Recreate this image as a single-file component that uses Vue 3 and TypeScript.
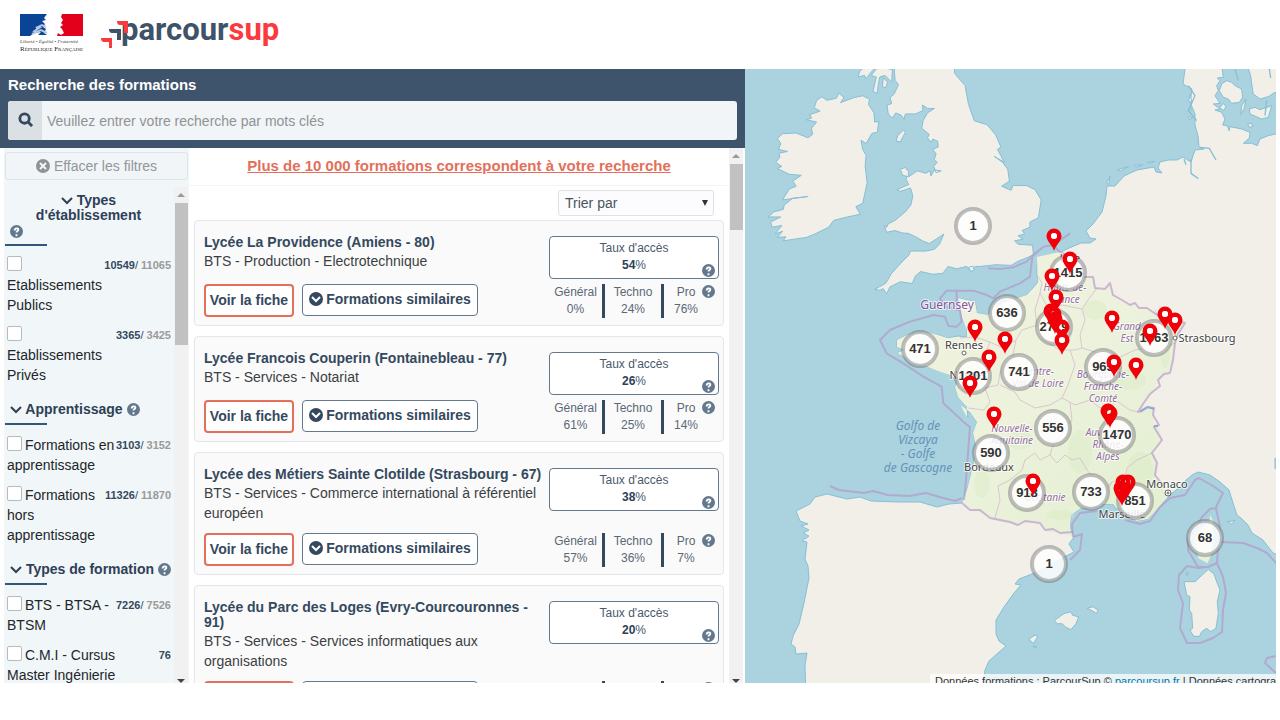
<script setup lang="ts">
import { ref } from 'vue'

interface FilterItem { id: string; label: string; count: string; total?: string }
interface FilterGroup { title: string; centered?: boolean; items: FilterItem[] }
interface Formation { school: string; course: string; rate: string; general: string; techno: string; pro: string }
interface Cluster { x: number; y: number; n: string }
interface MapLabel { x: number; y: number; kind: string; lines: string[] }

const query = ref('')
const sort = ref('')

const groups: FilterGroup[] = [
  {
    title: "Types d'établissement",
    centered: true,
    items: [
      { id: 'public', label: 'Etablissements Publics', count: '10549', total: '11065' },
      { id: 'prive', label: 'Etablissements Privés', count: '3365', total: '3425' },
    ],
  },
  {
    title: 'Apprentissage',
    items: [
      { id: 'app', label: 'Formations en apprentissage', count: '3103', total: '3152' },
      { id: 'hors', label: 'Formations hors apprentissage', count: '11326', total: '11870' },
    ],
  },
  {
    title: 'Types de formation',
    items: [
      { id: 'bts', label: 'BTS - BTSA - BTSM', count: '7226', total: '7526' },
      { id: 'cmi', label: 'C.M.I - Cursus Master Ingénierie', count: '76' },
    ],
  },
]

const formations: Formation[] = [
  { school: 'Lycée La Providence (Amiens - 80)', course: 'BTS - Production - Electrotechnique', rate: '54', general: '0%', techno: '24%', pro: '76%' },
  { school: 'Lycée Francois Couperin (Fontainebleau - 77)', course: 'BTS - Services - Notariat', rate: '26', general: '61%', techno: '25%', pro: '14%' },
  { school: 'Lycée des Métiers Sainte Clotilde (Strasbourg - 67)', course: 'BTS - Services - Commerce international à référentiel européen', rate: '38', general: '57%', techno: '36%', pro: '7%' },
  { school: 'Lycée du Parc des Loges (Evry-Courcouronnes - 91)', course: 'BTS - Services - Services informatiques aux organisations', rate: '20', general: '35%', techno: '48%', pro: '17%' },
]

const clusters: Cluster[] = [
  { x: 973, y: 226, n: '1' }, { x: 1068, y: 273, n: '1415' }, { x: 1007, y: 313, n: '636' },
  { x: 1054, y: 327, n: '2719' }, { x: 920, y: 349, n: '471' }, { x: 973, y: 376, n: '1201' },
  { x: 1019, y: 372, n: '741' }, { x: 1103, y: 367, n: '965' }, { x: 1154, y: 338, n: '1363' },
  { x: 1053, y: 428, n: '556' }, { x: 1117, y: 435, n: '1470' }, { x: 991, y: 453, n: '590' },
  { x: 1027, y: 493, n: '918' }, { x: 1091, y: 492, n: '733' }, { x: 1135, y: 501, n: '851' },
  { x: 1049, y: 564, n: '1' }, { x: 1205, y: 538, n: '68' },
]

const pins: [number, number][] = [
  [1054, 236], [1070, 259], [1052, 276], [1056, 297], [1051, 311], [1054, 314], [1055, 319],
  [1062, 327], [1062, 340], [975, 327], [1005, 339], [989, 357], [970, 383], [1112, 318],
  [1165, 314], [1175, 320], [1150, 331], [1114, 362], [1136, 365], [994, 414], [1108, 411],
  [1110, 413], [1033, 481], [1123, 482], [1128, 482], [1121, 488], [1122, 491],
]

const labels: MapLabel[] = [
  { x: 947, y: 309, kind: 'island', lines: ['Guernsey'] },
  { x: 964, y: 349, kind: 'city', lines: ['Rennes'] },
  { x: 968, y: 379, kind: 'city', lines: ['Nantes'] },
  { x: 1070, y: 262, kind: 'city', lines: ['Lille'] },
  { x: 1207, y: 342, kind: 'city', lines: ['Strasbourg'] },
  { x: 989, y: 471, kind: 'city', lines: ['Bordeaux'] },
  { x: 1122, y: 518, kind: 'city', lines: ['Marseille'] },
  { x: 1167, y: 488, kind: 'city', lines: ['Monaco'] },
  { x: 1065, y: 291, kind: 'region', lines: ['Hauts-de-', 'France'] },
  { x: 1127, y: 330, kind: 'region', lines: ['Grand', 'Est'] },
  { x: 1038, y: 375, kind: 'region', lines: ['Centre-', 'Val de Loire'] },
  { x: 1103, y: 378, kind: 'region', lines: ['Bourgogne-', 'Franche-', 'Comté'] },
  { x: 1012, y: 432, kind: 'region', lines: ['Nouvelle-', 'Aquitaine'] },
  { x: 1108, y: 436, kind: 'region', lines: ['Auvergne-', 'Rhône-', 'Alpes'] },
  { x: 1045, y: 501, kind: 'region', lines: ['Occitanie'] },
  { x: 918, y: 430, kind: 'sea', lines: ['Golfo de', 'Vizcaya', '- Golfe', 'de Gascogne'] },
]
const lineStep = (kind: string) => (kind === 'sea' ? 14 : 12)

const francePath =
  'M1055,253L1060,252 1073,258 1078,270 1082,277 1093,277 1097,288 1105,288 1110,283 1113,295 1122,300 1130,305 1147,308 1160,317 1172,320 1185,323 1178,334 1175,343 1173,360 1170,373 1164,374 1158,380 1153,392 1143,402 1138,412 1147,407 1155,410 1153,423 1159,428 1162,440 1152,453 1157,467 1155,478 1165,488 1167,495 1160,506 1148,519 1137,521 1120,511 1113,504 1100,504 1081,508 1071,515 1070,528 1073,537 1060,533 1047,532 1040,523 1030,522 1017,525 1010,522 993,520 985,514 977,513 962,503 967,490 972,470 977,450 973,433 977,422 970,412 960,405 967,417 967,407 958,397 955,387 960,379 950,375 935,370 920,363 907,358 897,353 905,350 897,347 897,340 907,335 923,332 938,335 947,338 967,337 967,330 962,317 958,298 975,302 977,313 988,315 993,308 1010,300 1027,295 1038,283 1037,257Z'
</script>

<template>
  <div class="page">
    <header class="masthead">
      <svg class="marianne" viewBox="0 0 66 42" role="img" aria-label="République Française">
        <path fill="#0a4595" d="M1 1H28L25 5 27 7 23 8 26 11 24 14 27 16 25 20 28 22H19L22 19 15 20 11 23H1Z" />
        <path fill="#e2001a" d="M43 1H64V23H38L39 20 42 22 45 20 43 16 41 14 44 12 42 10 44 7 42 4Z" />
        <path fill="none" stroke="#b4c6e0" stroke-width="2" d="M14 19L20 15 17 15 23 12 27 14M13 21L22 17 28 20" />
        <text x="1" y="30" class="motto">Liberté • Égalité • Fraternité</text>
        <text x="1" y="38" class="republic">R<tspan class="small">ÉPUBLIQUE</tspan> F<tspan class="small">RANÇAISE</tspan></text>
      </svg>
      <svg class="brand" viewBox="0 0 182 36" role="img" aria-label="parcoursup">
        <text x="22" y="23" class="wordmark">parcour<tspan class="sup">sup</tspan></text>
        <path fill="#fb3a40" d="M2 21H13V31H10V25H5Q2 25 2 21ZM18 4H29V16H25V8H21Q18 8 18 4Z" />
        <path fill="#3e5368" d="M10 12H22V23H18V16H13Q10 16 10 12Z" />
      </svg>
    </header>

    <main class="workspace">
      <section class="finder">
        <form class="search" @submit.prevent>
          <label class="search-title" for="keywords">Recherche des formations</label>
          <div class="search-bar">
            <button type="submit" class="search-button" aria-label="Rechercher">
              <svg viewBox="0 0 16 16"><circle cx="7" cy="7" r="5" /><path d="M11 11L15 15" /></svg>
            </button>
            <input id="keywords" v-model="query" type="text" placeholder="Veuillez entrer votre recherche par mots clés">
          </div>
        </form>

        <div class="columns">
          <aside class="filters">
            <button type="button" class="clear">
              <svg viewBox="0 0 14 14"><circle cx="7" cy="7" r="7" fill="#8e9396" /><path d="M4 4L10 10M10 4L4 10" stroke="#f1f6f8" stroke-width="2" /></svg>
              Effacer les filtres
            </button>
            <div class="filter-scroll">
              <div class="filter-list">
                <fieldset v-for="g in groups" :key="g.title" :class="{ centered: g.centered }">
                  <legend>
                    <span class="group-title">
                      <svg class="chevron" viewBox="0 0 12 8"><path d="M1 1L6 6 11 1" /></svg>
                      {{ g.title }}
                    </span>
                    <button type="button" class="help" aria-label="Aide">
                      <svg viewBox="0 0 14 14"><circle cx="7" cy="7" r="7" /><path d="M5 6C5 3 9 3 9 5C9 7 7 6 7 8M7 10V12" /></svg>
                    </button>
                  </legend>
                  <div v-for="i in g.items" :key="i.id" class="filter-row">
                    <label :for="i.id"><input :id="i.id" type="checkbox"> {{ i.label }}</label>
                    <span class="count"><b>{{ i.count }}</b><template v-if="i.total">/ <b class="total">{{ i.total }}</b></template></span>
                  </div>
                </fieldset>
              </div>
              <div class="scrollbar side" aria-hidden="true"><i class="up"></i><span class="thumb"></span><i class="down"></i></div>
            </div>
          </aside>

          <div class="results">
            <div class="result-list">
              <h2><a href="#">Plus de 10 000 formations correspondent à votre recherche</a></h2>
              <div class="sort">
                <select v-model="sort" aria-label="Trier par"><option value="">Trier par</option></select>
              </div>
              <article v-for="f in formations" :key="f.school" class="card">
                <div class="description">
                  <h3>{{ f.school }}</h3>
                  <p>{{ f.course }}</p>
                </div>
                <div class="rate">
                  <span>Taux d'accès</span>
                  <span><b>{{ f.rate }}</b>%</span>
                  <button type="button" class="help" aria-label="Aide">
                    <svg viewBox="0 0 14 14"><circle cx="7" cy="7" r="7" /><path d="M5 6C5 3 9 3 9 5C9 7 7 6 7 8M7 10V12" /></svg>
                  </button>
                </div>
                <div class="actions">
                  <button type="button" class="view">Voir la fiche</button>
                  <button type="button" class="similar">
                    <svg viewBox="0 0 14 14"><circle cx="7" cy="7" r="7" fill="#34495e" /><path d="M3 5L7 9 11 5" stroke="#fff" stroke-width="2" fill="none" /></svg>
                    Formations similaires
                  </button>
                </div>
                <div class="stats">
                  <span>Général<br>{{ f.general }}</span>
                  <span>Techno<br>{{ f.techno }}</span>
                  <span>Pro<br>{{ f.pro }}</span>
                  <button type="button" class="help" aria-label="Aide">
                    <svg viewBox="0 0 14 14"><circle cx="7" cy="7" r="7" /><path d="M5 6C5 3 9 3 9 5C9 7 7 6 7 8M7 10V12" /></svg>
                  </button>
                </div>
              </article>
            </div>
            <div class="scrollbar main" aria-hidden="true"><i class="up"></i><span class="thumb"></span><i class="down"></i></div>
          </div>
        </div>
      </section>

      <section class="map" aria-label="Carte des formations">
        <svg class="map-canvas" viewBox="745 69 531 614" preserveAspectRatio="xMinYMin slice">
          <defs>
            <linearGradient id="terrain" x1="0" y1="0" x2="1" y2="1">
              <stop offset="0" stop-color="#f1f2df" /><stop offset="0.5" stop-color="#ecf2dc" /><stop offset="1" stop-color="#e2efd0" />
            </linearGradient>
          </defs>
          <rect x="745" y="69" width="531" height="614" fill="#aad3df" />
          <!-- continental Europe -->
          <path class="land" d="M1183,60L1185,69 1183,84 1192,89 1190,102 1195,114 1195,125 1198,136 1199,147 1204,149 1195,150 1191,162 1183,157 1177,160 1168,160 1160,162 1158,168 1162,173 1156,172 1154,167 1137,170 1124,176 1115,186 1107,186 1106,196 1102,212 1093,224 1086,231 1090,238 1096,239 1090,243 1081,243 1069,248 1057,254 1042,260 1037,265 1037,275 1038,282 1027,295 1010,300 993,308 988,315 977,313 975,302 967,300 958,298 960,308 962,317 966,323 967,330 967,337 958,336 947,338 938,335 930,336 923,332 915,335 907,335 897,340 897,347 905,350 897,353 907,358 913,359 920,363 928,365 935,370 942,371 950,375 955,379 960,379 955,387 958,397 967,407 968,417 960,405 963,410 970,412 977,422 973,433 977,450 972,470 967,490 962,503 949,504 937,507 920,502 897,502 871,501 860,497 847,499 827,494 815,497 810,504 796,511 800,521 808,524 801,526 809,530 803,533 809,536 802,541 807,542 805,559 808,566 809,578 804,603 799,624 793,636 791,644 795,647 796,654 807,653 805,665 806,700 980,700 984,678 985,670 989,661 998,653 1006,646 999,641 996,634 996,620 1004,607 1014,593 1021,585 1015,584 1019,579 1032,574 1049,566 1060,559 1074,552 1069,544 1074,537 1070,528 1071,515 1081,508 1091,508 1100,504 1113,504 1116,509 1120,507 1125,512 1137,521 1148,519 1154,511 1160,506 1171,494 1180,487 1185,481 1192,475 1198,472 1210,475 1220,482 1229,490 1233,503 1237,515 1242,519 1248,525 1252,533 1263,540 1273,553 1290,560V60Z" />
          <g transform="translate(745 60) scale(.3412)">
            <path class="land" d="M436,10L440,60 450,72 437,100 425,110 430,128 416,132 420,158 432,170 442,155 458,162 466,174 470,158 500,158 522,148 520,132 535,142 555,142 535,155 522,178 518,200 540,218 535,228 545,242 550,232 565,238 566,255 550,262 560,275 555,292 563,300 553,312 560,330 575,325 555,322 545,340 542,325 530,332 505,325 480,342 475,338 472,350 480,365 445,380 455,385 485,375 492,398 486,425 470,445 440,470 420,480 415,490 408,486 415,505 440,500 462,507 478,508 500,518 520,530 540,538 560,525 583,510 570,540 555,555 530,560 485,560 480,572 460,592 430,625 412,655 380,672 395,675 405,670 415,685 425,665 455,650 490,655 500,632 515,620 550,628 580,625 595,605 620,612 650,605 660,618 675,605 690,605 735,600 780,602 800,590 830,578 845,570 843,543 800,540 790,530 815,525 800,515 820,510 812,500 835,490 835,475 860,462 868,410 850,380 825,368 785,368 780,382 752,370 775,355 770,320 755,300 730,282 760,300 740,262 750,255 735,220 710,190 672,178 655,130 645,75 615,40 612,10Z" />
            <path class="land" d="M275,97L268,112 240,118 225,108 210,118 203,140 220,150 190,160 195,170 180,175 210,182 195,200 198,218 185,228 150,214 110,216 95,230 105,245 98,262 125,268 100,273 102,285 90,300 108,312 95,318 130,335 165,338 140,355 150,370 130,378 110,410 185,400 140,405 115,425 112,438 85,445 68,460 105,460 75,475 80,490 108,485 88,510 110,502 95,520 120,518 112,530 145,525 180,520 205,510 245,490 260,470 300,460 338,452 325,430 345,420 358,360 352,310 355,280 345,262 340,235 355,245 372,215 388,212 392,180 380,182 378,155 362,130 365,115 345,105 320,110 280,125 290,110Z" />
            <path class="land" d="M465,205L470,212 455,240 443,238 447,222ZM455,320L470,315 480,328 478,342 462,338ZM335,35L345,25 385,20 370,35 355,55 350,45 332,50ZM390,20L432,28 430,65 410,45 395,50 390,75 388,98 375,92 385,50 370,45ZM405,52L418,65 412,82 403,78ZM1305,100L1310,125 1300,120ZM1303,140L1310,145 1300,150ZM1300,165L1312,170 1302,175ZM1070,340L1060,360 1066,365ZM1090,322L1125,312 1100,325ZM1140,308L1165,308 1145,314ZM1180,300L1200,297 1188,303ZM655,608L668,604 672,615 662,620ZM620,715L635,718 628,722Z" />
          </g>
          <!-- Baltic straits and Danish islands -->
          <g transform="translate(1160 64) scale(.3333)">
            <path class="water" d="M355,208L325,215 300,225 292,245 275,238 250,238 268,222 270,205 245,195 210,188 207,200 203,186 188,183 195,165 185,145 165,138 180,135 160,120 180,118 165,95 175,80 170,65 180,50 172,42 190,40 185,5H355Z" />
            <path class="land" d="M185,60L200,50 215,55 225,65 245,75 248,100 238,115 215,118 205,105 190,100 178,80ZM262,5L272,35 275,60 280,90 300,105 325,98 345,85 360,90V5ZM268,135L285,130 300,137 335,125 325,160 305,165 270,150ZM258,105L252,135 242,152 245,125ZM190,118L198,128 190,140 180,130ZM263,180L275,178 278,188 268,190Z" />
            <path class="coast" d="M120,250L148,253 168,288M93,285V328L115,344M72,285L78,302M320,110L315,155M225,15L235,50M328,15L332,42M85,65L105,95 85,140 110,170" />
          </g>
          <!-- Corsica, Sardinia and nearby islands -->
          <g transform="translate(1140 380) scale(.3333)">
            <path class="land" d="M205,568L222,582 230,605 240,630 232,665 235,700 228,745 212,755 200,745 185,755 178,770 160,768 150,750 158,745 155,700 148,690 150,650 140,645 132,605 165,605ZM262,425L285,422 275,432ZM138,580L145,577 140,588Z" />
            <path class="corsica" d="M211,405L218,420 220,470 215,520 203,550 175,535 165,470 190,440 207,430Z" />
            <path class="water" d="M405,235L420,235V275L405,265Z" />
          </g>
          <g transform="translate(745 460) scale(.3412)">
            <path class="land" d="M907,470L935,450 955,445 960,455 978,460 970,480 955,497 940,490 930,480 915,480ZM1003,435L1020,430 1035,440 1030,450 1018,442ZM832,525L850,513 858,518 845,538ZM845,545L855,548 848,550Z" />
          </g>

          <path class="france" :d="francePath" />
          <g class="forest">
            <ellipse cx="982" cy="484" rx="8" ry="14" /><ellipse cx="1060" cy="515" rx="14" ry="5" /><ellipse cx="1140" cy="470" rx="13" ry="18" />
            <ellipse cx="1080" cy="452" rx="12" ry="22" /><ellipse cx="1128" cy="380" rx="18" ry="10" /><ellipse cx="1165" cy="350" rx="5" ry="18" />
            <ellipse cx="1095" cy="310" rx="12" ry="10" /><ellipse cx="1020" cy="440" rx="12" ry="10" /><ellipse cx="1137" cy="492" rx="16" ry="8" />
          </g>
          <g class="admin">
            <path d="M1037,275L1042,283 1040,293 1048,308 1062,305 1082,309 1088,300 1097,288" />
            <path d="M1082,309L1085,320 1080,335 1082,348 1095,352 1105,362 1120,357 1135,350 1150,347 1160,350 1175,343" />
            <path d="M1040,293L1035,310 1037,325 1043,340 1060,350 1075,350 1082,348" />
            <path d="M960,338L975,337 990,342 985,355 975,365 960,370M990,342L1003,348 1016,340 1022,330 1037,325" />
            <path d="M1016,340L1012,360 1000,372 998,385 985,388 990,402 984,410 968,408" />
            <path d="M1000,385L1015,392 1020,400 1035,408 1050,405 1062,398 1068,385 1075,365 1070,350" />
            <path d="M1062,398L1075,405 1090,400 1100,408 1115,400 1130,410 1138,412M1070,403L1072,420 1060,435 1052,448 1050,455 1040,460 1035,453 1025,460 1022,470 1010,480 998,486 1000,500 995,518" />
            <path d="M1050,455L1057,463 1065,455 1072,460 1080,458 1087,470 1095,480 1105,488 1112,482 1125,478 1127,468 1137,460 1152,453M1112,482L1105,495 1100,504" />
            <path d="M1155,310L1160,320 1158,335 1155,345" />
          </g>
          <path class="border" d="M1055,247L1060,252 1073,258 1078,270 1082,277 1093,277 1095,288 1105,289 1110,283 1113,295 1122,300 1130,305 1135,303 1139,308 1147,308 1160,317 1172,320 1185,323 1178,334 1175,343 1173,360 1170,373 1164,374 1158,380 1160,386 1150,394 1143,404 1138,412 1147,407 1154,408 1153,415 1159,425 1154,427 1162,440 1152,453 1157,463 1155,475 1165,488M962,503L970,510 980,510 990,518 1000,520 1010,522 1018,525 1025,521 1040,523 1045,530 1053,529 1060,533 1073,532" />
          <g class="border" transform="translate(880 220) scale(.3333)">
            <path d="M325,145L360,147 400,142 440,125 465,100 490,80 520,75 570,40M340,235L360,215 420,190 450,170 457,110 490,80" />
            <path d="M340,235L320,225 280,212H200L180,235 195,260 240,272 245,305 230,320 205,318 195,290 160,285 90,305 30,330 0,360 20,400 70,430 130,470 185,500 190,550 245,600M230,212V262" />
          </g>
          <path class="border" d="M961,420L970,427 969,440 966,480 964,500M830,486L839,490 864,493 873,491 888,495 909,496 926,493 943,498 955,501 962,498" />
          <path class="border" d="M1073,537L1082,534 1080,550 1070,560M1073,537L1072,524 1080,513 1097,511M1125,520L1140,524 1150,521 1160,507 1170,498 1185,495 1195,480 1199,478 1213,486 1223,493 1217,505 1216,508 1210,509 1202,517 1195,530 1188,540 1188,550 1198,567 1208,567 1217,563 1218,547 1220,527 1216,508M1220,542L1243,543 1257,548 1267,553 1276,563M1208,567L1198,568 1187,566 1179,575 1178,590 1183,603 1180,628 1187,643 1200,643 1213,638 1222,632 1223,610 1226,593 1223,577 1217,563M1276,656L1267,658 1265,663 1276,673" />
          <path class="lake" d="M1140,412L1148,407 1154,409M1154,426L1158,426" />
          <g class="place"><circle cx="964" cy="353" r="2" /><circle cx="1175" cy="338" r="2" /><circle cx="1168" cy="493" r="3" /><circle cx="1168" cy="493" r="1" /></g>
          <text v-for="l in labels" :key="l.lines[0]" :x="l.x" :y="l.y" :class="['label', l.kind]">
            <tspan v-for="(line, i) in l.lines" :key="line" :x="l.x" :y="l.y + i * lineStep(l.kind)">{{ line }}</tspan>
          </text>
          <g v-for="(c, i) in clusters" :key="i" class="cluster">
            <circle :cx="c.x" :cy="c.y" r="17" />
            <text :x="c.x" :y="c.y + 4">{{ c.n }}</text>
          </g>
          <path v-for="(p, i) in pins" :key="i" class="pin" :transform="`translate(${p[0]} ${p[1]})`" fill-rule="evenodd" d="M0,15C-1,10 -7.5,5 -7.5,0A7.5,7.5 0 1 1 7.5,0C7.5,5 1,10 0,15ZM-3,0A3,3 0 1 0 3,0A3,3 0 1 0 -3,0Z" />
          <g class="pin-eyes"><circle v-for="(p, i) in pins.filter((_, k) => k < 4 || (k > 7 && k < 20) || k === 22)" :key="i" :cx="p[0]" :cy="p[1]" r="3" /></g>
        </svg>
        <div class="attribution">Données formations : ParcourSup © <a href="#">parcoursup.fr</a> | Données cartographiques</div>
      </section>
    </main>
  </div>
</template>

<style>
body { margin: 0; background: #fff; overflow: hidden; }
</style>

<style scoped>
* { box-sizing: border-box; }
.page { display: flex; flex-direction: column; height: calc(100vh - 37px); padding-right: 4px; font: 14px/20px "Liberation Sans", Arial, sans-serif; color: #3a3f44; }
button, input, select { font: inherit; margin: 0; }
button { cursor: pointer; }
.masthead { flex: none; display: flex; gap: 14px; height: 69px; padding: 13px 19px; }
.marianne { width: 66px; height: 42px; overflow: visible; }
.motto { font: italic 5px "Liberation Serif", serif; fill: #444; }
.republic { font: 7px "Liberation Serif", serif; fill: #222; }
.small { font-size: 5px; }
.brand { width: 182px; height: 36px; margin-top: 4px; overflow: visible; }
.wordmark { font: 700 31px Roboto, sans-serif; fill: #3e5368; }
.sup { fill: #fb3a40; }

.workspace { flex: 1; min-height: 0; display: grid; grid-template-columns: minmax(0, 745fr) minmax(0, 531fr); }
.finder { display: flex; flex-direction: column; min-height: 0; min-width: 0; }
.search { flex: none; display: flex; flex-direction: column; gap: 6px; padding: 6px 8px 8px; background: #3e546c; }
.search-title { color: #fff; font-size: 15px; font-weight: bold; }
.search-bar { display: flex; height: 39px; border-radius: 3px; overflow: hidden; background: #f1f5f8; }
.search-button { width: 34px; padding: 0 0 3px; border: 0; background: #dae0e4; }
.search-button svg { width: 15px; height: 15px; display: block; margin: 0 auto; fill: none; stroke: #34495e; stroke-width: 3; }
.search-bar input { flex: 1; min-width: 0; padding: 0 5px; border: 0; outline: 0; background: transparent; }
.search-bar input::placeholder { color: #929292; opacity: 1; }

.columns { flex: 1; min-height: 0; display: flex; }
.filters { flex: none; display: flex; flex-direction: column; gap: 7px; width: 185px; margin-left: 4px; padding: 4px 1px 0; background: #f1f6f8; }
.clear { flex: none; display: flex; align-items: center; justify-content: center; gap: 4px; height: 28px; padding: 0; border: 1px solid #dfe4e7; border-radius: 3px; background: #f1f5f7; color: #92979a; }
.clear svg, .similar svg { width: 14px; height: 14px; }
.filter-scroll { flex: 1; min-height: 0; display: flex; overflow: hidden; }
.filter-list { flex: 1; min-width: 0; padding: 5px 3px 0 0; overflow: hidden; }
fieldset { display: block; min-width: 0; margin: 0 0 7px; padding: 0; border: 0; }
legend { position: relative; display: flex; align-items: center; gap: 4px; width: 100%; margin-bottom: 10px; padding: 0 0 8px 5px; color: #2e4057; font-weight: bold; line-height: 15px; }
legend::after { content: ""; position: absolute; left: 0; bottom: 0; width: 42px; height: 2px; background: #34567a; }
.chevron { width: 12px; height: 8px; fill: none; stroke: #2e4057; stroke-width: 2; }
.group-title { white-space: nowrap; }
.centered legend { flex-direction: column; align-items: flex-start; gap: 2px; margin-bottom: 9px; }
.centered .group-title { align-self: stretch; padding: 1px 4px 0 0; text-align: center; white-space: normal; }
.help { width: 13px; height: 13px; padding: 0; border: 0; background: none; }
.help svg { display: block; width: 13px; height: 13px; fill: none; }
.help circle { fill: #63788d; }
.help path { stroke: #fff; stroke-width: 2; }
.filter-row { position: relative; margin: 0 0 10px 2px; color: #22262a; }
.filter-row label { display: block; width: 112px; }
.filter-row input { appearance: none; width: 15px; height: 15px; margin-right: -1px; border: 1px solid #b5babd; border-radius: 2px; background: #fff; vertical-align: -1px; }
.count { position: absolute; top: 0; right: 0; font-size: 11px; color: #34495e; }
.total { color: #9a9a9a; }
.scrollbar { flex: none; display: flex; flex-direction: column; align-items: center; width: 14px; background: #f1f1f1; overflow: hidden; }
.scrollbar i { flex: none; border: 4px solid transparent; }
.scrollbar .up { border-bottom-color: #999; border-top-width: 0; margin: 6px 0; }
.scrollbar .down { border-top-color: #444; border-bottom-width: 0; margin-top: auto; }
.thumb { width: 13px; background: #c1c1c1; }
.side .thumb { height: 142px; }
.main .thumb { height: 66px; }

.results { flex: 1; min-width: 0; display: flex; padding-right: 2px; overflow: hidden; }
.result-list { flex: 1; min-width: 0; padding: 0 5px; overflow: hidden; }
h2 { margin: 0 -5px; height: 38px; border-bottom: 1px solid #f2f3f4; font-size: 15px; line-height: 36px; text-align: center; }
h2 a { color: #e2705a; text-decoration: underline; }
.sort { position: relative; display: flex; justify-content: flex-end; padding: 4px 10px; }
.sort select { appearance: none; width: 156px; height: 26px; padding: 0 6px; border: 1px solid #dde1e5; border-radius: 3px; color: #4a5560; background: #fcfcfe; }
.sort::after { content: ""; position: absolute; right: 16px; top: 14px; border: 3px solid transparent; border-top: 6px solid #333; border-bottom: 0; pointer-events: none; }
.card { display: grid; grid-template-columns: minmax(0, 1fr) 170px; margin-bottom: 10px; padding: 14px 4px 7px 9px; border: 1px solid #e3e7ea; border-radius: 4px; background: #fafafa; }
.description { padding-bottom: 10px; }
h3 { margin: 0 0 1px; font-size: 14px; line-height: 15px; color: #34495e; }
p { margin: 0; }
.rate { position: relative; display: flex; flex-direction: column; align-items: center; height: 43px; margin: 1px 0 5px; padding-top: 3px; border: 1px solid #62788c; border-radius: 4px; background: #fff; font-size: 12px; line-height: 17px; color: #4a5a6a; }
.rate b { color: #2e4057; }
.rate .help { position: absolute; right: 3px; bottom: 1px; }
.actions { display: flex; align-items: flex-start; gap: 8px; height: 34px; }
.actions button { padding: 0 0 2px; background: #fff; color: #34495e; font-weight: bold; white-space: nowrap; }
.view { width: 90px; height: 33px; border: 2px solid #e2705a; border-radius: 4px; }
.similar { display: flex; align-items: center; justify-content: center; gap: 3px; width: 176px; height: 32px; border: 1px solid #62788c; border-radius: 4px; }
.stats { display: grid; grid-template-columns: 53px 59px 47px 11px; font-size: 12px; line-height: 17px; text-align: center; color: #5a6876; }
.stats span + span { border-left: 3px solid #34495e; }
.stats .help { margin: 1px 0 0 -6px; }

.map { position: relative; min-width: 0; overflow: hidden; background: #aad3df; }
.map-canvas { display: block; width: 100%; height: 100%; }
.land { fill: #f2efe9; stroke: #86bfd4; stroke-width: 1; vector-effect: non-scaling-stroke; stroke-linejoin: round; }
.water { fill: #aad3df; stroke: #86bfd4; stroke-width: 1; vector-effect: non-scaling-stroke; }
.coast { fill: none; stroke: #86bfd4; stroke-width: 4; }
.france { fill: url(#terrain); }
.corsica { fill: #e8f0d8; }
.forest { fill: #d9ecc4; opacity: .4; }
.admin { fill: none; stroke: #d9bccf; stroke-width: 1; opacity: .8; }
.border, .border path { fill: none; stroke: #b48fc4; stroke-opacity: .6; stroke-width: 2px; vector-effect: non-scaling-stroke; stroke-linejoin: round; }
.lake { fill: none; stroke: #8eabd8; stroke-width: 2; }
.place { fill: #fff; stroke: #666; }
.label { font: 11px "Noto Sans", sans-serif; text-anchor: middle; paint-order: stroke; stroke: #ffffffb0; stroke-width: 2px; stroke-linejoin: round; }
.city { fill: #444; }
.region { font-size: 10px; font-style: italic; fill: #94709f; }
.island { font-size: 12px; fill: #86549c; }
.sea { font-size: 12px; font-style: italic; fill: #6692b8; stroke: none; }
.cluster circle { fill: #ffffffd8; stroke: #6e6e6e70; stroke-width: 4; }
.cluster text { font: bold 13px "Liberation Sans", Arial, sans-serif; text-anchor: middle; fill: #333; }
.pin { fill: #f00008; }
.pin-eyes { fill: #fff; }
.attribution { position: absolute; right: 0; bottom: 0; width: 346px; height: 9px; padding-left: 5px; overflow: hidden; white-space: nowrap; background: #ffffffc0; font-size: 11px; line-height: 15px; color: #333; }
.attribution a { color: #0078a8; text-decoration: none; }
</style>
